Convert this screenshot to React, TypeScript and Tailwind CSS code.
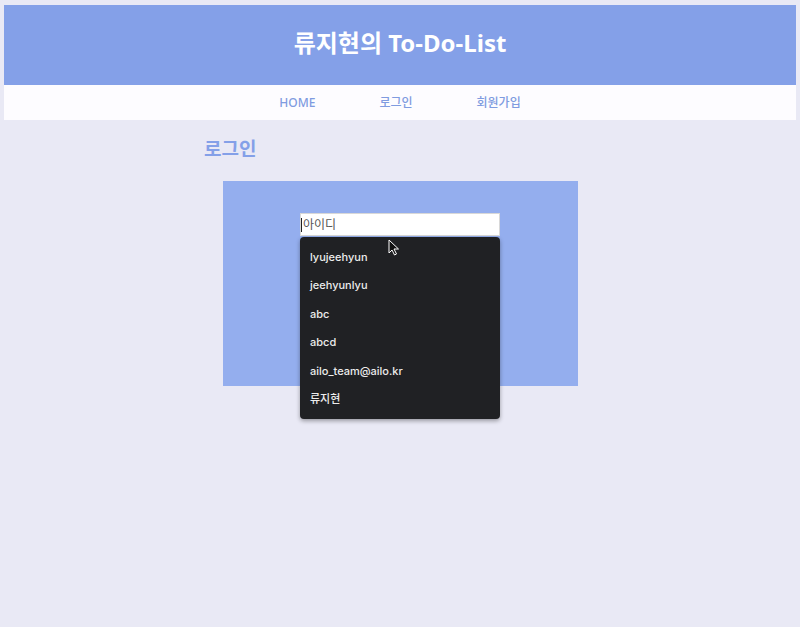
import React from "react";

const items = ["lyujeehyun", "jeehyunlyu", "abc", "abcd", "ailo_team@ailo.kr", "류지현"];

export default function App() {
  return (
    <div
      className="relative min-h-[627px] bg-[#e9e9f5] pt-[5px] px-[4px]"
      style={{ fontFamily: '"Noto Sans", "Noto Sans CJK KR", sans-serif' }}
    >
      <header className="h-[80px] bg-[#84a0e8] flex items-center justify-center pb-[4px]">
        <h1 className="text-[24px] font-bold text-white leading-none">류지현의 To-Do-List</h1>
      </header>
      <nav className="h-[35px] bg-[#fdfcff] flex items-center justify-center gap-[64px] text-[12px] font-medium text-[#7f9be0]">
        <span>HOME</span>
        <span>로그인</span>
        <span>회원가입</span>
      </nav>
      <main className="w-[392px] mx-auto pt-[15px]">
        <h2 className="text-[19px] font-bold text-[#84a0e8] leading-[28px]">로그인</h2>
        <div className="mt-[18px] w-[355px] mx-auto h-[205px] bg-[#94aeee] pt-[32px]">
          <div className="relative w-[200px] mx-auto">
            <div className="h-[23px] bg-white border border-[#d8d8d8] flex items-center text-[12px] text-[#555]">
              <span className="w-px h-[14px] bg-[#222] mr-[1px]" />
              <span>아이디</span>
            </div>
            <div
              className="absolute left-0 top-[24px] w-[200px] bg-[#202124] rounded-[4px] py-[6px] shadow-[0_2px_4px_rgba(0,0,0,0.35)] z-10"
              style={{ fontFamily: 'Inter, "Noto Sans CJK KR", sans-serif' }}
            >
              {items.map((t) => (
                <div key={t} className="h-[28.4px] flex items-center pl-[10px] text-[11px] text-[#ececec] font-medium">
                  {t}
                </div>
              ))}
            </div>
            <svg className="absolute left-[88px] top-[26px] z-20" width="12" height="17" viewBox="0 0 12 17">
              <path d="M1 1 L1 14 L4 11 L6.5 16 L8.5 15 L6 10 L10.5 10 Z" fill="#111" stroke="#fff" strokeWidth="1" strokeLinejoin="round" />
            </svg>
          </div>
        </div>
      </main>
    </div>
  );
}
